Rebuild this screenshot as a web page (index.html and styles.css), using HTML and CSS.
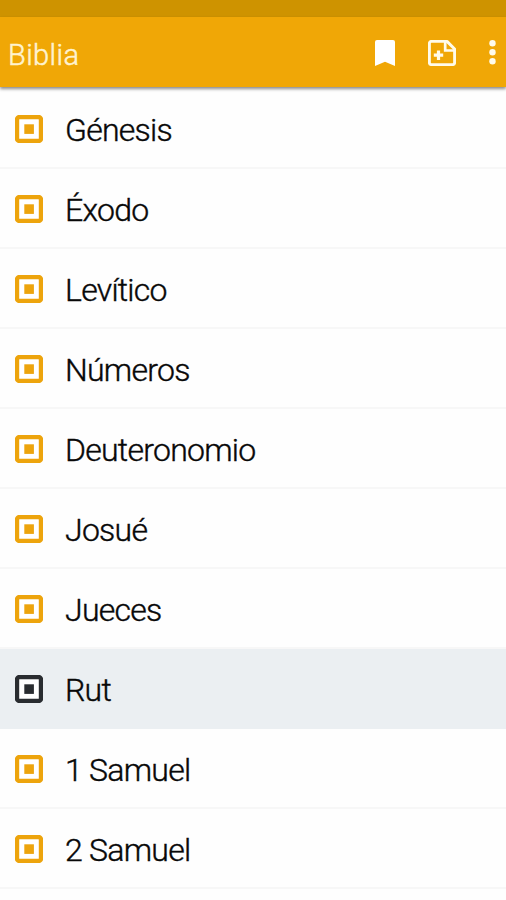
FILE: index.html
```html
<!DOCTYPE html>
<html lang="es">
<head>
<meta charset="utf-8">
<title>Biblia</title>
<link rel="stylesheet" href="styles.css">
</head>
<body>
<svg class="defs" aria-hidden="true">
  <symbol id="book" viewBox="0 0 28 28">
    <rect x="2" y="2" width="24" height="24" rx="2.5" fill="#fff" stroke="currentColor" stroke-width="4.4"/>
    <rect x="9.3" y="9.3" width="9.6" height="9.6" fill="currentColor"/>
  </symbol>
</svg>
<div class="status-bar"></div>
<header class="app-bar">
  <h1 class="title">Biblia</h1>
  <svg class="bookmark" viewBox="0 0 20 26"><path d="M2 0h16a2 2 0 0 1 2 2V26l-10-4.3L0 26V2A2 2 0 0 1 2 0z" fill="#fff"/></svg>
  <svg class="note" viewBox="0 0 28 26" fill="none" stroke="#fffbea" stroke-width="2.9"><path d="M3.4 1.4H19L26.6 9V22.6a2 2 0 0 1-2 2H3.4a2 2 0 0 1-2-2V3.4a2 2 0 0 1 2-2z" stroke-linejoin="round"/><path d="M17.2 1.5V10.5H26.5" stroke-width="2.7"/><path d="M10.5 10.5v9.5M5.8 15.2h9.4" stroke-width="3.2"/></svg>
  <svg class="more" viewBox="0 0 7 25" fill="#fffbea"><circle cx="3.5" cy="3.3" r="3.2"/><circle cx="3.5" cy="12.3" r="3.2"/><circle cx="3.5" cy="21.3" r="3.2"/></svg>
</header>
<ul class="books">
  <li class="row"><svg class="icon"><use href="#book"/></svg><span class="name">Génesis</span></li>
  <li class="row"><svg class="icon"><use href="#book"/></svg><span class="name">Éxodo</span></li>
  <li class="row"><svg class="icon"><use href="#book"/></svg><span class="name">Levítico</span></li>
  <li class="row"><svg class="icon"><use href="#book"/></svg><span class="name">Números</span></li>
  <li class="row"><svg class="icon"><use href="#book"/></svg><span class="name">Deuteronomio</span></li>
  <li class="row"><svg class="icon"><use href="#book"/></svg><span class="name">Josué</span></li>
  <li class="row"><svg class="icon"><use href="#book"/></svg><span class="name">Jueces</span></li>
  <li class="row selected"><svg class="icon"><use href="#book"/></svg><span class="name">Rut</span></li>
  <li class="row"><svg class="icon"><use href="#book"/></svg><span class="name">1 Samuel</span></li>
  <li class="row"><svg class="icon"><use href="#book"/></svg><span class="name">2 Samuel</span></li>
</ul>
</body>
</html>
```
FILE: styles.css
```css
* { box-sizing: border-box; }
body {
  margin: 0;
  height: 900px;
  overflow: hidden;
  background: #fefefe;
  font-family: Roboto, "Liberation Sans", sans-serif;
}
.defs { display: none; }
.status-bar { height: 17px; background: #ce9300; }
.app-bar {
  display: flex;
  height: 70px;
  padding: 23px 10px 0 8px;
  background: #f0a706;
  box-shadow: 0 2px 3px rgba(0, 0, 0, .45);
}
.title {
  flex: 1;
  margin: 0;
  color: #fff3cf;
  font-size: 29px;
  font-weight: 300;
  line-height: 31px;
  letter-spacing: .4px;
  -webkit-text-stroke: .5px #fff3cf;
}
.bookmark { width: 20px; height: 26px; margin-right: 33px; }
.note { width: 28px; height: 26px; margin-right: 33px; }
.more { width: 7px; height: 25px; }
.books { margin: 0; padding: 2px 0 0; list-style: none; }
.row {
  display: flex;
  align-items: center;
  height: 80px;
  padding: 0 15px;
  border-bottom: 2px solid #f7f7f7;
}
.row.selected { background: #ebeff2; border-color: #ebeff2; }
.icon { width: 28px; height: 28px; margin: 1px 22px 0 0; color: #eda40c; overflow: visible; }
.selected .icon { color: #292c30; }
.name {
  padding-top: 3px;
  color: #080808;
  font-size: 32px;
  font-weight: 300;
  line-height: 38px;
  letter-spacing: -.74px;
  -webkit-text-stroke: .4px #080808;
}
```
